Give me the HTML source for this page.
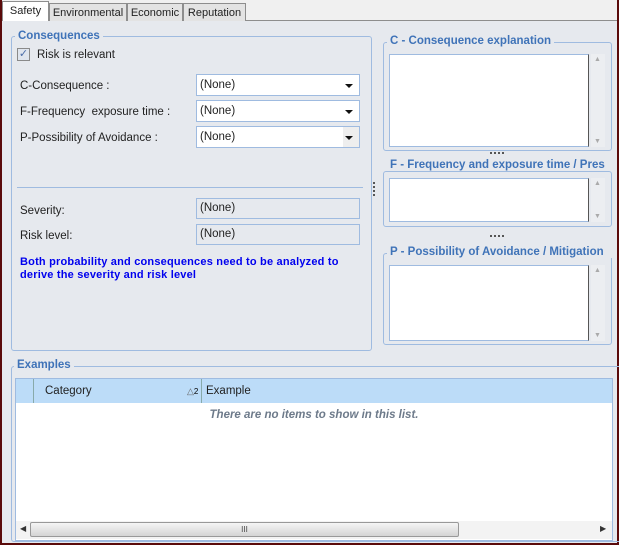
<!DOCTYPE html>
<html><head><style>
*{box-sizing:border-box;margin:0;padding:0}
body{width:619px;height:545px;background:#e6e9ee;font:11px "Liberation Sans",sans-serif;color:#222;position:relative;overflow:hidden}
.a{position:absolute}
.tab{position:absolute;top:3px;height:18px;border:1px solid #8d8d8d;border-bottom:none;background:#e3e3e3;padding:3px 0 0;text-align:center;font-size:11px;white-space:nowrap}
.grp{position:absolute;border:1px solid #9fbbe0;border-radius:3px}
.gt{position:absolute;background:#e6e9ee;color:#3f73b8;font-weight:bold;font-size:11.5px;padding:0 3px;line-height:12px}
.cb{position:absolute;left:196px;width:164px;height:22px;background:#fff;border:1px solid #9fbbe0;padding:4px 3px;font-size:11.5px}
.cb::after{content:"";position:absolute;right:6px;top:9px;border:4px solid transparent;border-top:4px solid #111;border-bottom:none}
.ro{position:absolute;left:196px;width:164px;height:21px;border:1px solid #9fbbe0;padding:3px 3px;font-size:11.5px}
.lb{position:absolute;left:20px;font-size:11.5px}
.ta{position:absolute;left:389px;width:200px;background:#fff;border:1px solid #9fbbe0;border-right:1px solid #555}
.sb{position:absolute;left:591px;width:14px;background:#eceef1}
.sb::before{content:"▲";position:absolute;top:2px;left:3px;font-size:7px;color:#aaa}
.sb::after{content:"▼";position:absolute;bottom:2px;left:3px;font-size:7px;color:#aaa}
</style></head><body>
<div class="a" style="left:0;top:0;width:2px;height:545px;background:#5a0a0a"></div>
<div class="a" style="right:0;top:0;width:2px;height:545px;background:#5a0a0a"></div>
<div class="a" style="left:0;bottom:0;width:619px;height:2px;background:#5a0a0a"></div>
<div class="a" style="left:2px;top:0;width:615px;height:20px;background:#f0f0f0"></div>
<div class="a" style="left:2px;top:20px;width:615px;height:1px;background:#8d8d8d"></div>
<div class="tab" style="left:2px;top:1px;height:20px;width:47px;background:#fff;padding-top:3px">Safety</div>
<div class="tab" style="left:49px;width:78px">Environmental</div>
<div class="tab" style="left:127px;width:56px">Economic</div>
<div class="tab" style="left:183px;width:63px">Reputation</div>

<div class="grp" style="left:11px;top:36px;width:361px;height:315px"></div>
<div class="gt" style="left:15px;top:30px">Consequences</div>
<div class="a" style="left:17px;top:48px;width:13px;height:13px;border:1px solid #8a8a8a;background:#dfe5ee;color:#4a6da8;font-size:11px;line-height:11px;text-align:center">✓</div>
<div class="lb" style="left:37px;top:49px">Risk is relevant</div>
<div class="lb" style="top:80px">C-Consequence :</div>
<div class="lb" style="top:106px">F-Frequency &nbsp;exposure time :</div>
<div class="lb" style="top:132px">P-Possibility of Avoidance :</div>
<div class="cb" style="top:74px">(None)</div>
<div class="cb" style="top:100px">(None)</div>
<div class="cb" style="top:126px">(None)<span class="a" style="right:0;top:0;width:16px;height:20px;background:#eee"></span></div>
<div class="a" style="left:17px;top:187px;width:346px;height:1px;background:#9fbbe0"></div>
<div class="lb" style="top:205px">Severity:</div>
<div class="lb" style="top:230px">Risk level:</div>
<div class="ro" style="top:198px">(None)</div>
<div class="ro" style="top:224px">(None)</div>
<div class="a" style="left:20px;top:256px;color:#0000ee;font-weight:bold;font-size:11px;line-height:13px;letter-spacing:0.2px">Both probability and consequences need to be analyzed to<br>derive the severity and risk level</div>
<div class="a" style="left:373px;top:182px;width:2px;height:14px;border-left:2px dotted #555"></div>

<div class="grp" style="left:383px;top:42px;width:229px;height:109px"></div>
<div class="gt" style="left:387px;top:35px">C - Consequence explanation</div>
<div class="ta" style="top:54px;height:93px"></div><div class="sb" style="top:54px;height:93px"></div>
<div class="a" style="left:490px;top:152px;width:14px;border-top:2px dotted #555"></div>
<div class="grp" style="left:383px;top:171px;width:229px;height:56px"></div>
<div class="gt" style="left:387px;top:159px;white-space:nowrap;width:226px;overflow:hidden">F - Frequency and exposure time / Pres</div>
<div class="ta" style="top:178px;height:44px"></div><div class="sb" style="top:178px;height:44px"></div>
<div class="a" style="left:490px;top:235px;width:14px;border-top:2px dotted #555"></div>
<div class="grp" style="left:383px;top:253px;width:229px;height:92px"></div>
<div class="gt" style="left:387px;top:246px;white-space:nowrap;width:226px;overflow:hidden">P - Possibility of Avoidance / Mitigation</div>
<div class="ta" style="top:265px;height:76px"></div><div class="sb" style="top:265px;height:76px"></div>

<div class="grp" style="left:11px;top:366px;width:612px;height:176px"></div>
<div class="gt" style="left:14px;top:359px">Examples</div>
<div class="a" style="left:15px;top:378px;width:598px;height:163px;background:#fff;border:1px solid #9fbbe0"></div>
<div class="a" style="left:16px;top:379px;width:596px;height:24px;background:#bcdcf8"></div>
<div class="a" style="left:33px;top:379px;width:1px;height:24px;background:#8aa"></div>
<div class="a" style="left:201px;top:379px;width:1px;height:24px;background:#8aa"></div>
<div class="a" style="left:45px;top:385px;font-size:11.5px">Category</div>
<div class="a" style="left:187px;top:386px;font-size:9px;color:#666">△<span style="font-size:8px;color:#000">2</span></div>
<div class="a" style="left:206px;top:385px;font-size:11.5px">Example</div>
<div class="a" style="left:16px;top:409px;width:596px;text-align:center;font-weight:bold;font-style:italic;color:#6d7a8a;font-size:11.5px">There are no items to show in this list.</div>
<div class="a" style="left:16px;top:521px;width:596px;height:18px;background:#f3f3f3"></div>
<div class="a" style="left:30px;top:522px;width:429px;height:15px;border:1px solid #999;border-radius:2px;background:linear-gradient(#f5f5f5,#d4d4d4);text-align:center;font-size:8px;line-height:13px;color:#444">III</div>
<div class="a" style="left:20px;top:524px;font-size:8px;color:#333">◀</div>
<div class="a" style="left:600px;top:524px;font-size:8px;color:#333">▶</div>
</body></html>
